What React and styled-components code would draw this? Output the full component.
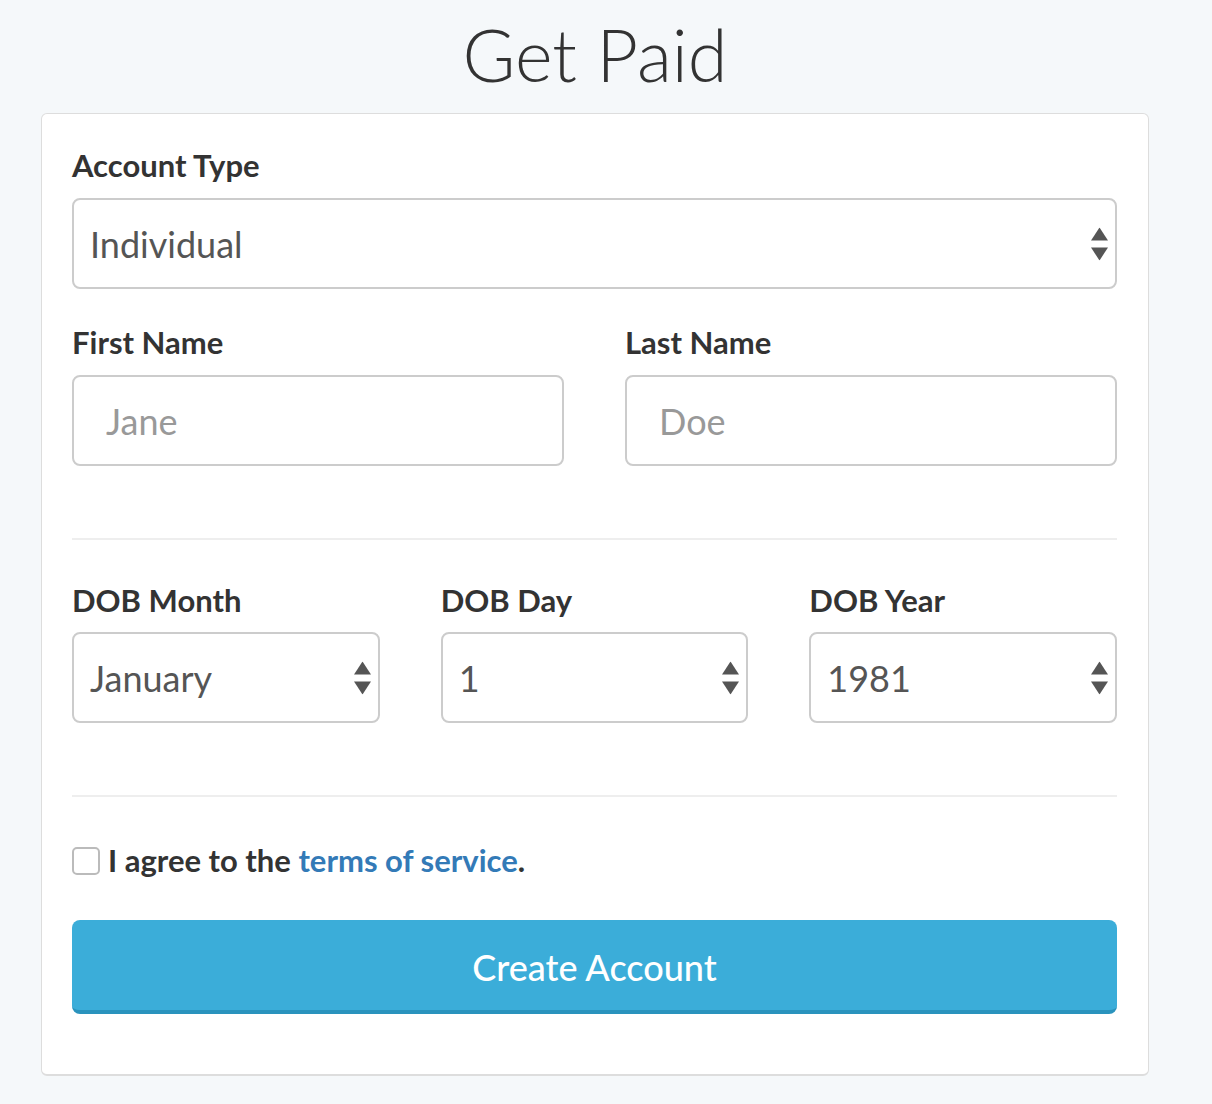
import React from "react";
import styled, { createGlobalStyle } from "styled-components";

const Global = createGlobalStyle`
  html, body { margin: 0; padding: 0; background: #f5f8fa; }
  body { font-family: Lato, "Open Sans", "Liberation Sans", sans-serif; color: #333; }
  * { box-sizing: border-box; }
`;

const Page = styled.div`
  width: 1108px;
  margin-left: 41px;
  padding-top: 14px;
  padding-bottom: 28px;
`;

const Title = styled.h1`
  margin: 0 0 19px;
  text-align: center;
  font-family: "Lato Light", Lato, sans-serif;
  font-weight: 300;
  font-size: 72px;
  line-height: 80px;
  color: #333;
`;

const Card = styled.form`
  background: #fff;
  border: 1px solid #ddd;
  border-bottom-width: 2px;
  border-radius: 6px;
  padding: 31px 31px 60px 30px;
`;

const Group = styled.div`
  margin-bottom: 33px;
`;

const Label = styled.label`
  display: block;
  font-weight: 700;
  font-size: 31px;
  line-height: 40px;
  margin-bottom: ${(p) => p.$mb || 13}px;
  color: #333;
`;

const Row = styled.div`
  display: grid;
  grid-template-columns: repeat(${(p) => p.$cols}, 1fr);
  column-gap: 61px;
`;

const SelectWrap = styled.div`
  position: relative;
`;

const Select = styled.select`
  display: block;
  width: 100%;
  height: 91px;
  appearance: none;
  -webkit-appearance: none;
  background: #fff;
  border: 2px solid #ccc;
  border-radius: 8px;
  padding: 0 40px 0 16px;
  font-family: Lato, sans-serif;
  font-size: 36px;
  color: #555;
  outline: none;
`;

const Arrows = styled.svg`
  position: absolute;
  right: 9px;
  top: 50%;
  transform: translateY(-50%);
  pointer-events: none;
`;

const Input = styled.input`
  display: block;
  width: 100%;
  height: 91px;
  background: #fff;
  border: 2px solid #ccc;
  border-radius: 8px;
  padding: 0 32px;
  font-family: Lato, sans-serif;
  font-size: 36px;
  color: #555;
  outline: none;
  &::placeholder { color: #999; }
`;

const Rule = styled.hr`
  border: 0;
  border-top: 2px solid #eee;
  margin: 39px 0 40px;
`;

const CheckRow = styled.label`
  display: flex;
  align-items: center;
  gap: 8px;
  padding-top: 3px;
  font-weight: 700;
  font-size: 31px;
  line-height: 40px;
  color: #333;
  margin: 0 0 40px;
`;

const Box = styled.span`
  width: 28px;
  height: 28px;
  border: 2px solid #bbb;
  border-radius: 5px;
  background: #fff;
  flex: none;
  margin-top: 2px;
`;

const Link = styled.a`
  color: #337ab7;
  text-decoration: none;
`;

const Button = styled.button`
  display: block;
  width: 100%;
  height: 94px;
  border: 0;
  border-bottom: 4px solid #2a93bd;
  border-radius: 8px;
  background: #3badd9;
  color: #fff;
  font-family: Lato, sans-serif;
  font-size: 36px;
  font-weight: 500;
  padding: 4px 0 0;
  cursor: pointer;
`;

function SelectField({ value, options }) {
  return (
    <SelectWrap>
      <Select defaultValue={value}>
        {options.map((o) => (
          <option key={o}>{o}</option>
        ))}
      </Select>
      <Arrows width="17" height="33" viewBox="0 0 17 33">
        <polygon points="8.5,0 17,13 0,13" fill="#555" />
        <polygon points="0,20 17,20 8.5,33" fill="#555" />
      </Arrows>
    </SelectWrap>
  );
}

export default function App() {
  return (
    <>
      <Global />
      <Page>
        <Title>Get Paid</Title>
        <Card onSubmit={(e) => e.preventDefault()}>
          <Group>
            <Label>Account Type</Label>
            <SelectField value="Individual" options={["Individual", "Company"]} />
          </Group>
          <Row $cols={2}>
            <Group>
              <Label>First Name</Label>
              <Input placeholder="Jane" />
            </Group>
            <Group>
              <Label>Last Name</Label>
              <Input placeholder="Doe" />
            </Group>
          </Row>
          <Rule />
          <Row $cols={3}>
            <Group>
              <Label $mb={12}>DOB Month</Label>
              <SelectField value="January" options={["January", "February", "March"]} />
            </Group>
            <Group>
              <Label $mb={12}>DOB Day</Label>
              <SelectField value="1" options={["1", "2", "3"]} />
            </Group>
            <Group>
              <Label $mb={12}>DOB Year</Label>
              <SelectField value="1981" options={["1980", "1981", "1982"]} />
            </Group>
          </Row>
          <Rule />
          <CheckRow>
            <Box />
            <span>
              I agree to the <Link href="#">terms of service</Link>.
            </span>
          </CheckRow>
          <Button type="submit">Create Account</Button>
        </Card>
      </Page>
    </>
  );
}
